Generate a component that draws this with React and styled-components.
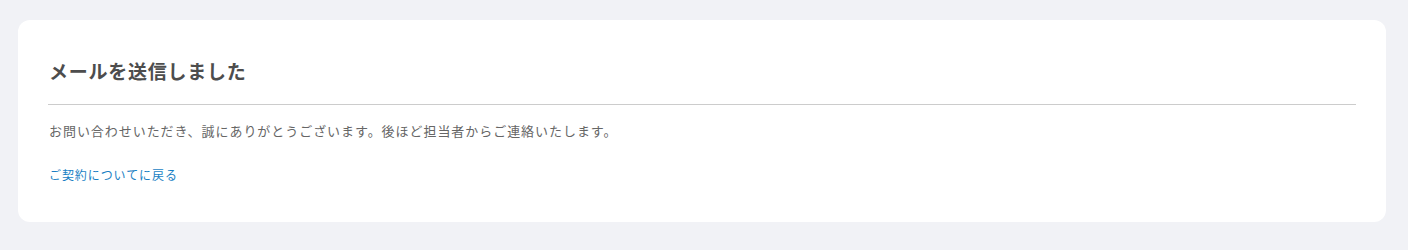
import React from 'react';
import styled, { createGlobalStyle } from 'styled-components';

const GlobalStyle = createGlobalStyle`
	html, body {
		margin: 0;
		padding: 0;
		background-color: #F1F2F6;
		font-family: "Noto Sans CJK JP", "Noto Sans", sans-serif;
	}
`;

const Page = styled.div`
	width: 100%;
	height: 250px;
	box-sizing: border-box;
	padding: 20px 22px 0 18px;
`;

const Card = styled.div`
	background-color: #FFFFFF;
	border-radius: 12px;
	padding: 30px 30px 34px 30px;
	box-sizing: border-box;
	height: 202px;
`;

const Title = styled.h1`
	margin: 0;
	font-size: 19px;
	font-weight: 700;
	line-height: 42px;
	letter-spacing: 0.75px;
	color: #4D4D4D;
	padding-left: 1px;
`;

const Divider = styled.hr`
	border: 0;
	height: 1px;
	background-color: #CCCCCC;
	margin: 12px 0 0 0;
`;

const Message = styled.p`
	margin: 16px 0 0 0;
	font-size: 13px;
	line-height: 20px;
	letter-spacing: 0.95px;
	color: #666666;
	padding-left: 1px;
`;

const BackLink = styled.a`
	display: inline-block;
	margin: 24px 0 0 1px;
	font-size: 12px;
	line-height: 20px;
	letter-spacing: 0.92px;
	color: #1A7FC4;
	text-decoration: none;
	cursor: pointer;
`;

export default function App() {
	return (
		<>
			<GlobalStyle/>
			<Page>
				<Card>
					<Title>メールを送信しました</Title>
					<Divider/>
					<Message>お問い合わせいただき、誠にありがとうございます。後ほど担当者からご連絡いたします。</Message>
					<BackLink href="#">ご契約についてに戻る</BackLink>
				</Card>
			</Page>
		</>
	);
}
